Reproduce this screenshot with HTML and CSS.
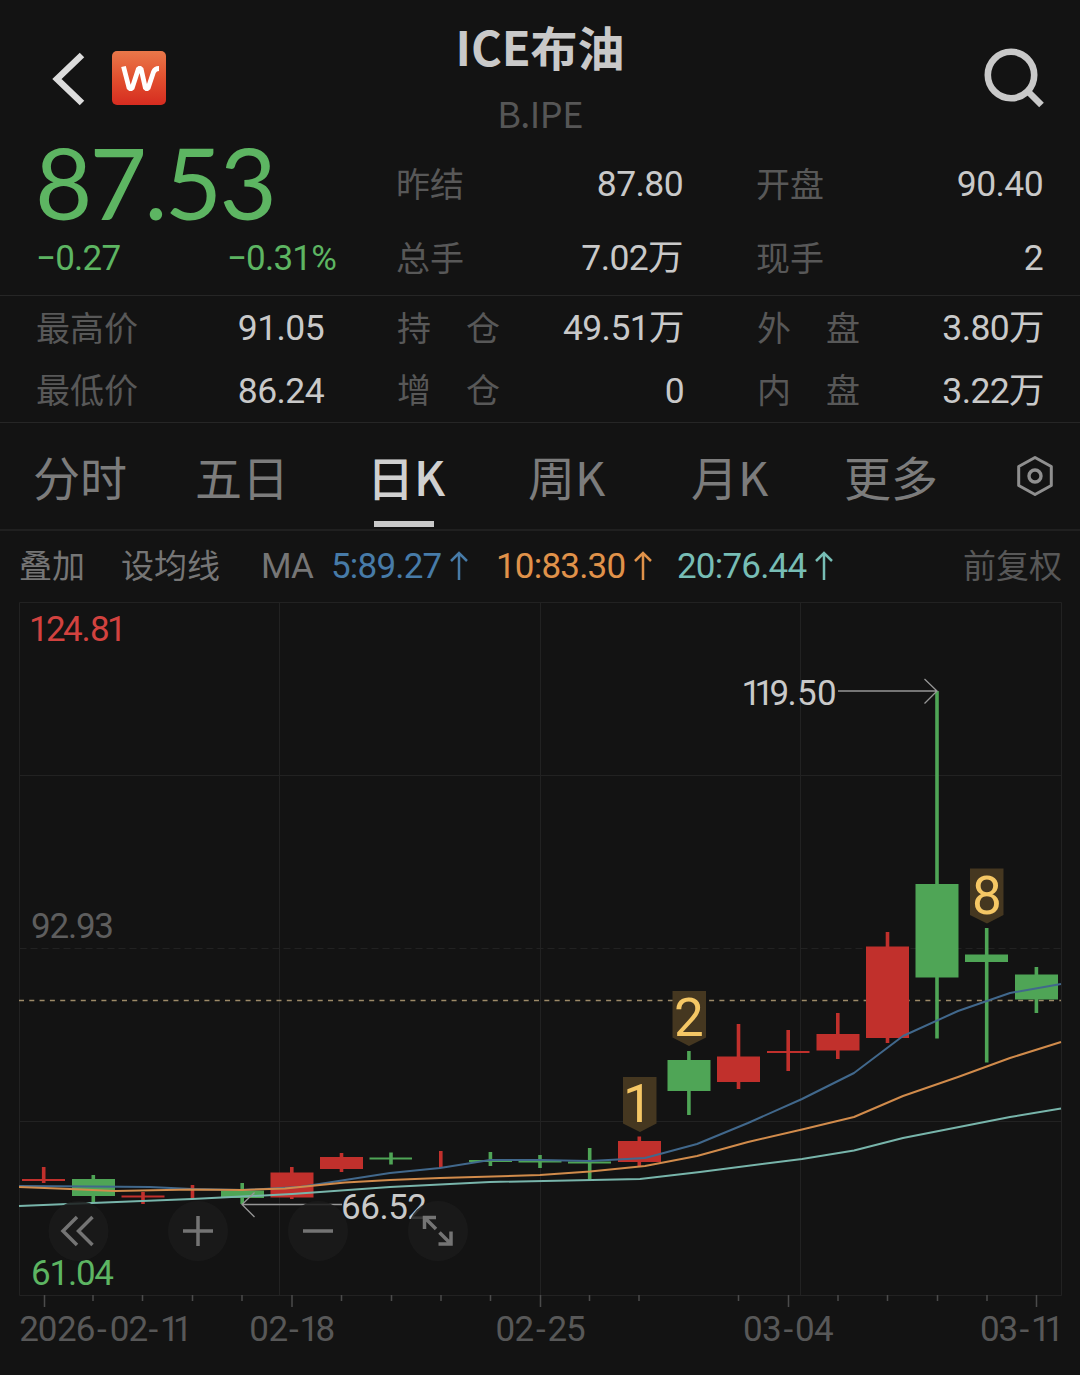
FILE: index.html
```html
<!DOCTYPE html>
<html lang="zh-CN">
<head>
<meta charset="utf-8">
<title>ICE布油 B.IPE</title>
<link rel="stylesheet" href="styles.css">
</head>
<body>
<main class="app">
  <header class="header">
    <div class="header-left">
      <svg class="back" width="34" height="54" viewBox="0 0 34 54"><path d="M30 3 5 27 30 51" fill="none" stroke="#dcdcdc" stroke-width="6.500"/></svg>
      <svg class="logo" width="56" height="56" viewBox="0 0 56 56">
        <defs><linearGradient id="logo-fill" x1="0" y1="0" x2="0" y2="1"><stop offset="0" stop-color="#e9784a"/><stop offset=".5" stop-color="#e2502f"/><stop offset="1" stop-color="#d62c20"/></linearGradient></defs>
        <rect x="1" y="1" width="54" height="54" rx="5" fill="url(#logo-fill)"/>
        <path d="M12.500 16.500 18.200 38.500H21L27.500 18.500H30L34.500 38.500H37L42.500 22Q44 18.500 48 18.500" fill="none" stroke="#fff" stroke-width="4.800" stroke-linejoin="bevel"/>
      </svg>
    </div>
    <div class="title-block">
      <h1 class="title">ICE布油</h1>
      <div class="code">B.IPE</div>
    </div>
    <svg class="search" width="64" height="64" viewBox="0 0 64 64"><circle cx="28" cy="29" r="23.200" fill="none" stroke="#c9c9c9" stroke-width="6.600"/><path d="M44 44.500 58.500 59" stroke="#c9c9c9" stroke-width="6.500"/></svg>
  </header>

  <section class="quote">
    <div class="price-block">
      <div class="price">87.53</div>
      <div class="change"><span>−0.27</span><span>−0.31%</span></div>
    </div>
    <dl class="stats">
      <div class="stat"><dt>昨结</dt><dd>87.80</dd></div>
      <div class="stat"><dt>开盘</dt><dd>90.40</dd></div>
      <div class="stat"><dt>总手</dt><dd>7.02万</dd></div>
      <div class="stat"><dt>现手</dt><dd>2</dd></div>
    </dl>
  </section>

  <dl class="details">
    <div class="stat"><dt>最高价</dt><dd>91.05</dd></div>
    <div class="stat"><dt class="spread"><span>持</span><span>仓</span></dt><dd>49.51万</dd></div>
    <div class="stat"><dt class="spread"><span>外</span><span>盘</span></dt><dd>3.80万</dd></div>
    <div class="stat"><dt>最低价</dt><dd>86.24</dd></div>
    <div class="stat"><dt class="spread"><span>增</span><span>仓</span></dt><dd>0</dd></div>
    <div class="stat"><dt class="spread"><span>内</span><span>盘</span></dt><dd>3.22万</dd></div>
  </dl>

  <nav class="tabs">
    <span class="tab">分时</span>
    <span class="tab">五日</span>
    <span class="tab active">日K</span>
    <span class="tab">周K</span>
    <span class="tab">月K</span>
    <span class="tab">更多</span>
    <svg class="settings" width="40" height="44" viewBox="0 0 40 44"><path d="M20 3.500 36.300 12.500V31.500L20 40.500 3.700 31.500V12.500Z" fill="none" stroke="#8f8f8f" stroke-width="3" stroke-linejoin="round"/><circle cx="20" cy="22" r="6" fill="none" stroke="#8f8f8f" stroke-width="3.400"/></svg>
  </nav>

  <div class="legend">
    <span>叠加</span>
    <span>设均线</span>
    <span class="ma">MA</span>
    <span class="ma5">5:89.27<svg class="up" viewBox="0 0 18 30"><path d="M9 29V2M1 10 9 2 17 10"/></svg></span>
    <span class="ma10">10:83.30<svg class="up" viewBox="0 0 18 30"><path d="M9 29V2M1 10 9 2 17 10"/></svg></span>
    <span class="ma20">20:76.44<svg class="up" viewBox="0 0 18 30"><path d="M9 29V2M1 10 9 2 17 10"/></svg></span>
    <span class="adjust">前复权</span>
  </div>

  <svg class="chart" width="1080" height="775" viewBox="0 600 1080 775">
    <!-- grid -->
    <path class="grid" d="M19.500 602.500H1061.500V1295.500H19.500ZM19.500 775.500H1061.500M19.500 1121.500H1061.500M279.500 602.500V1295.500M540.500 602.500V1295.500M800.500 602.500V1295.500"/>
    <path class="grid" stroke-dasharray="7 4" d="M19.500 948.500H1061.500"/>
    <path class="ticks" d="M44.500 1295V1307M292 1295V1307M540.500 1295V1307M788.500 1295V1307M1036.500 1295V1307M93 1295V1301M142.500 1295V1301M192.500 1295V1301M242 1295V1301M341.500 1295V1301M391.500 1295V1301M441 1295V1301M490.500 1295V1301M589.500 1295V1301M639 1295V1301M738.500 1295V1301M838 1295V1301M887.500 1295V1301M937.500 1295V1301M987 1295V1301"/>
    <path class="last-price" d="M19 1000.500H1061"/>

    <!-- rising candles -->
    <path class="wick red" d="M43.700 1167V1183M143 1192V1204M192.500 1185V1199M291.800 1167V1199M341.500 1153V1172M440.800 1151V1168M639.300 1136.500V1166M738.500 1024V1089M788.200 1030V1071M837.800 1013V1059M887.500 932V1043"/>
    <path class="flat red" d="M22 1180H65M121.500 1196.500H164.500M767 1052H809.500"/>
    <path class="body red-fill" d="M270.500 1172.500h43v25h-43zM320 1157h43v12h-43zM618 1141h43v21h-43zM717 1056.500h43v25.500h-43zM816.500 1034h43v16.500h-43zM866 946.500h43v91.500h-43z"/>
    <!-- falling candles -->
    <path class="wick green" d="M93.300 1175V1203M242.200 1183V1204M391 1152.500V1164.500M490.400 1152V1166M540 1155V1168M589.700 1148V1180M688.900 1051V1115M937 691V1038.500M986.700 928V1062.500M1036.400 967V1013"/>
    <path class="flat green" d="M369.500 1158.500H412M469 1161H512M518.500 1161.500H561.500M568 1162.500H611"/>
    <path class="body green-fill" d="M72 1179h43v17h-43zM221 1190.500h43v7.500h-43zM667.500 1060h43v31h-43zM915.500 884h43v93.500h-43zM965 954.500h43v7.500h-43zM1015 974.500h43v25h-43z"/>

    <!-- moving averages -->
    <path class="line line20" d="M19 1206 92 1203 192 1199 292 1194 390 1187 490 1182 640 1179 700 1172 802 1159 854 1150.500 903 1138 1010 1117 1061 1108.500"/>
    <path class="line line5" d="M19 1186 92 1186.500 150 1187 192 1189 242 1190 300 1187 345 1180 390 1173 440 1168 490 1160 540 1160 590 1161 645 1158 697 1144 748 1123 802 1099 854 1073 903 1036 958 1011 1010 993 1061 984"/>
    <path class="line line10" d="M19 1187 70 1189 115 1191 192 1189.500 242 1190 285 1188.500 345 1182.500 390 1180 440 1178 540 1175 590 1171.500 645 1166 697 1156 748 1142 802 1129.500 854 1117 903 1096 958 1077 1010 1058 1061 1042"/>

    <!-- high and low callouts -->
    <path class="callout" d="M838 691H937M924.500 679 937 691 924.500 703.500"/>
    <path class="callout" d="M342 1204.500H242M254.500 1192.500 242 1204.500 254.500 1217"/>
    <text class="value bright" x="741.500 754.500 769.500 787.500 797 817" y="705">119.50</text>
    <text class="value bright" x="341" y="1219" textLength="86">66.52</text>

    <text class="value top" x="29 46 63 81.500 90 107" y="641">124.81</text>
    <text class="value mid" x="31" y="938" textLength="83">92.93</text>
    <text class="value low" x="31" y="1284.500" textLength="83">61.04</text>

    <!-- sequence markers -->
    <path class="flag" d="M623 1077h33.500v46.500L640 1132l-17-8.500z"/>
    <path class="flag" d="M672.500 991h33.500v46.500L689 1046l-16.500-8.500z"/>
    <path class="flag" d="M970 868.500h33.500v46.500L987 923.500l-17-8.500z"/>
    <text class="flag-text" x="638" y="1121.500">1</text>
    <text class="flag-text" x="689" y="1036">2</text>
    <text class="flag-text" x="987" y="913.500">8</text>

    <!-- chart controls -->
    <g class="control"><circle cx="78.500" cy="1231" r="30"/><path d="M77 1217 63 1231 77 1245M92.500 1217 78.500 1231 92.500 1245"/></g>
    <g class="control"><circle cx="198" cy="1231" r="30"/><path d="M183 1231H213M198 1216V1246"/></g>
    <g class="control"><circle cx="318" cy="1231" r="30"/><path d="M303 1231H333"/></g>
    <g class="control"><circle cx="438" cy="1231" r="30"/><path d="M436 1229 424.500 1217.500M424.500 1229V1217.500H436M439.500 1232.500 451 1244M438.500 1244H451V1231.500"/></g>

    <text class="value date" x="19.200 37.700 57 75.700 97 109.700 128.500 148.500 160 173" y="1340.500">2026-02-11</text>
    <text class="value date" x="249.200 268.500 289 299.500 315.500" y="1340.500">02-18</text>
    <text class="value date" x="495.500 514.500 536 547.500 566" y="1340.500">02-25</text>
    <text class="value date" x="743 762 783.500 795 814" y="1340.500">03-04</text>
    <text class="value date" x="980 998.500 1019.500 1031 1044.500" y="1340.500">03-11</text>
  </svg>
</main>
</body>
</html>
```

FILE: styles.css
```css
* { box-sizing: border-box; }

body {
  margin: 0;
  background: #131313;
  color: #c9c9c9;
  font-family: Roboto, "Noto Sans CJK SC", sans-serif;
}

.app {
  width: 1080px;
  height: 1375px;
  overflow: hidden;
}

.header {
  display: grid;
  grid-template-columns: 1fr auto 1fr;
  height: 140px;
  padding: 0 33px 0 33px;
}

.header-left {
  display: flex;
  gap: 25px;
  padding: 50px 0 0 19px;
}

.back { margin-top: 2px; }

.title-block {
  text-align: center;
  font-family: "Noto Sans CJK SC", sans-serif;
}

.title {
  margin: 16px 0 0;
  font-size: 47px;
  font-weight: 700;
  line-height: 60px;
}

.code {
  margin-top: 6px;
  font-size: 36px;
  line-height: 60px;
  letter-spacing: -0.500px;
  color: #565656;
}

.search {
  justify-self: end;
  margin-top: 46px;
}

.quote {
  display: grid;
  grid-template-columns: 360px 1fr;
  height: 155px;
  padding: 0 36px;
}

.price-block { color: #5db562; }

.price {
  height: 91px;
  margin-left: -1px;
  font-family: Lato, sans-serif;
  font-size: 99px;
  line-height: 84px;
  font-kerning: none;
  letter-spacing: -2.800px;
}

.change {
  display: flex;
  justify-content: space-between;
  width: 300px;
  font-size: 35px;
  line-height: 56px;
  letter-spacing: -0.800px;
}

.stats {
  display: grid;
  grid-template-columns: 287px 287px;
  column-gap: 73px;
  grid-template-rows: 74px 74px;
  margin: 7px 0 0;
}

.stat {
  display: flex;
  justify-content: space-between;
  align-items: center;
}

dt {
  margin-top: -3px;
  color: #585858;
  font-size: 34px;
  font-family: "Noto Sans CJK SC", sans-serif;
  line-height: 40px;
}

dd {
  margin: 0;
  font-size: 35.500px;
  letter-spacing: -0.600px;
  line-height: 40px;
}

.details {
  display: grid;
  grid-template-columns: 288px 287px 287px;
  column-gap: 73px;
  grid-template-rows: 62.500px 62.500px;
  height: 128px;
  margin: 0;
  padding: 1px 36px 0;
  border-top: 1px solid #262626;
  border-bottom: 1px solid #262626;
}

.spread {
  display: flex;
  gap: 35px;
}

.tabs {
  display: grid;
  grid-template-columns: 162px 172px 161px 163px 153px 172px 40px;
  height: 108px;
  padding-left: 33px;
  border-bottom: 2px solid #202020;
  font-family: "Noto Sans CJK SC", sans-serif;
  font-size: 47px;
  line-height: 105px;
  color: #7c7c7c;
}

.tab.active {
  display: flex;
  flex-direction: column;
  color: #d0d0d0;
  font-weight: 500;
}

.tab.active::after {
  content: "";
  width: 60px;
  height: 6px;
  margin: -7px 0 0 7px;
  background: #c9c9c9;
}

.settings { margin: 31px 0 0 -1px; }

.legend {
  display: grid;
  grid-template-columns: 102px 140px 70px 165px 181px 180px 1fr;
  height: 69px;
  padding: 0 18px 0 19px;
  font-size: 35px;
  line-height: 71px;
  letter-spacing: -0.800px;
  color: #767676;
  white-space: nowrap;
}

.legend > span:nth-child(-n+2),
.adjust { font-size: 33px; letter-spacing: 0; }

.ma5 { color: #477ba8; stroke: #477ba8; }
.ma10 { color: #e0924a; stroke: #e0924a; }
.ma20 { color: #77bdb5; stroke: #77bdb5; }

.up {
  width: 18px;
  height: 30px;
  margin-left: 9px;
  vertical-align: -3px;
  fill: none;
  stroke-width: 2.500;
}

.legend .adjust {
  text-align: right;
  color: #585858;
}

.chart { display: block; }

.grid { fill: none; stroke: #222; stroke-width: 1; }
.ticks { stroke: #4b4b4b; stroke-width: 1.500; }
.last-price { stroke: #9d8a68; stroke-width: 1.500; stroke-dasharray: 5 5.300; }

.wick { stroke-width: 3.600; }
.flat { stroke-width: 2.200; }
.red { stroke: #c1302c; }
.green { stroke: #4fa556; }
.red-fill { fill: #c1302c; }
.green-fill { fill: #4fa556; }

.line { fill: none; stroke-width: 2; stroke-linejoin: round; }
.line5 { stroke: #41688c; }
.line10 { stroke: #d18b4b; }
.line20 { stroke: #78b5ab; }

.callout { fill: none; stroke: #969696; stroke-width: 1.300; }

.value { font-size: 35px; }
.bright { fill: #c9c9c9; }
.top { fill: #d2423f; }
.mid { fill: #5e5e5e; }
.low { fill: #5db562; }
.date { fill: #585858; }

.flag { fill: #453720; }
.flag-text {
  fill: #f5c765;
  font-size: 53px;
  text-anchor: middle;
}

.control circle { fill: #1b1b1b; fill-opacity: 0.850; }
.control path { fill: none; stroke: #747474; stroke-width: 3.500; }
```
